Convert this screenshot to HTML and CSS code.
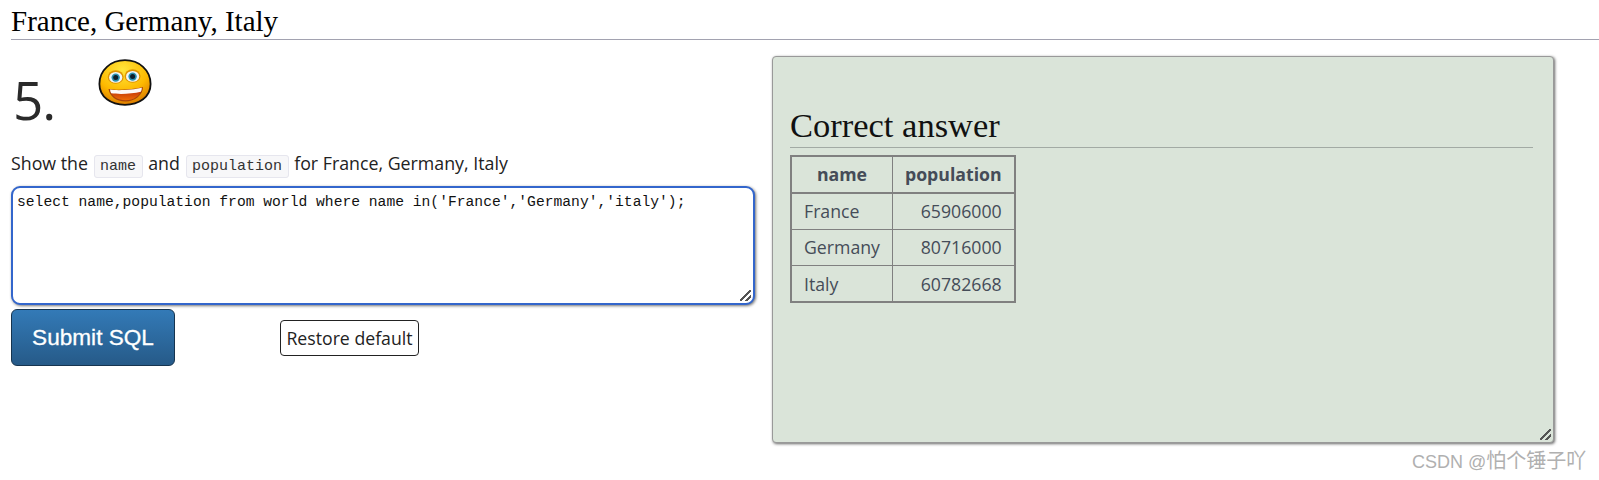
FILE: index.html
```html
<!DOCTYPE html>
<html lang="en">
<head>
<meta charset="utf-8">
<title>France, Germany, Italy</title>
<link rel="stylesheet" href="styles.css">
</head>
<body>
<h2 class="title">France, Germany, Italy</h2>
<main class="layout">
  <section class="question">
    <div class="qhead">
      <span class="qnum">5.</span>
      <svg class="smiley" width="54" height="47" viewBox="0 0 54 47" aria-hidden="true">
        <defs>
          <radialGradient id="face" cx="45%" cy="22%" r="82%">
            <stop offset="0" stop-color="#ffe63c"/>
            <stop offset="0.6" stop-color="#fdb900"/>
            <stop offset="1" stop-color="#d87400"/>
          </radialGradient>
          <linearGradient id="mouth" x1="0" y1="0" x2="0" y2="1">
            <stop offset="0" stop-color="#b82a08"/>
            <stop offset="1" stop-color="#ee6c06"/>
          </linearGradient>
        </defs>
        <path d="M27 1.2C41 1.2 52.6 11 52.6 25C52.6 38 41 45.8 27 45.8C13 45.8 1.4 38 1.4 25C1.4 11 13 1.2 27 1.2Z" fill="url(#face)" stroke="#111" stroke-width="1.8"/>
        <ellipse cx="17.7" cy="18" rx="8" ry="6.8" fill="#df9400"/>
        <ellipse cx="34.6" cy="17" rx="8" ry="6.8" fill="#df9400"/>
        <ellipse cx="17.7" cy="18.4" rx="6.6" ry="5.4" fill="#f0f6f7"/>
        <ellipse cx="34.6" cy="17.4" rx="6.6" ry="5.4" fill="#f0f6f7"/>
        <circle cx="17.7" cy="18.6" r="4.2" fill="#2a8fb0"/>
        <circle cx="34.6" cy="17.6" r="4.2" fill="#2a8fb0"/>
        <circle cx="17.7" cy="18.6" r="2.5" fill="#0e1f2a"/>
        <circle cx="34.6" cy="17.6" r="2.5" fill="#0e1f2a"/>
        <path d="M10.5 30C20 31.5 35 30.5 45 28C45 36 37 42.5 27.5 42.5C18 42.5 11.5 37 10.5 30Z" fill="#a8440a"/>
        <path d="M12.4 32C21 34 34 33 43.4 30C42.6 36.6 36 41.2 27.5 41.2C20 41.2 13.8 37.6 12.4 32Z" fill="url(#mouth)"/>
        <path d="M12 30.6C20 31.8 35 30.9 43.8 28.8C43.8 30.6 43.4 31.8 42.8 32.8C34 35 21 35.5 13.2 34.3C12.5 33.2 12.2 32 12 30.6Z" fill="#fdf9f6"/>
      </svg>
    </div>
    <p class="prompt">Show the <code class="tok">name</code> and <code class="tok">population</code> for France, Germany, Italy</p>
    <textarea class="sql" spellcheck="false">select name,population from world where name in('France','Germany','italy');</textarea>
    <div class="actions">
      <button class="submit" type="button">Submit SQL</button>
      <button class="restore" type="button">Restore default</button>
    </div>
  </section>
  <section class="answer">
    <h2 class="answer-title">Correct answer</h2>
    <table class="result">
      <thead>
        <tr><th>name</th><th>population</th></tr>
      </thead>
      <tbody>
        <tr><td>France</td><td class="num">65906000</td></tr>
        <tr><td>Germany</td><td class="num">80716000</td></tr>
        <tr><td>Italy</td><td class="num">60782668</td></tr>
      </tbody>
    </table>
  </section>
</main>
<div class="watermark">CSDN @<span class="wm-name">怕个锤子吖</span></div>
</body>
</html>
```

FILE: styles.css
```css
html, body {
  height: 100%;
  overflow: hidden;
}
body {
  margin: 0;
  padding: 0 11px;
  background: #fff;
  color: #222;
  font-family: "Open Sans", "Noto Sans", sans-serif;
  font-size: 16px;
  position: relative;
  box-sizing: border-box;
}
.title {
  margin: 0 -11px 0 0;
  height: 40px;
  box-sizing: border-box;
  padding-top: 4px;
  border-bottom: 1px solid #a2a2b0;
  color: #000;
  font-family: "Liberation Serif", serif;
  font-size: 29px;
  line-height: 34px;
  font-weight: 400;
}
.layout {
  display: grid;
  grid-template-columns: 744px 782px;
  column-gap: 17px;
  align-items: start;
  padding-top: 16px;
}
.qhead {
  display: flex;
  height: 96px;
  align-items: flex-start;
}
.qnum {
  font-size: 53px;
  line-height: 72px;
  letter-spacing: -1px;
  color: #2a2a2a;
  width: 85px;
  padding: 8px 0 0 2px;
}
.smiley {
  margin-top: 3px;
}
.prompt {
  margin: 0;
  height: 34px;
  line-height: 22px;
  font-size: 17.8px;
  white-space: nowrap;
  color: #222;
}
.tok {
  font-family: "Liberation Mono", monospace;
  font-size: 15px;
  background: #f7f7f9;
  border: 1px solid #e6e6ee;
  border-radius: 3px;
  padding: 2px 5.5px;
  margin: 0 1px;
  color: #333;
}
.sql {
  display: block;
  width: 744px;
  height: 119px;
  box-sizing: border-box;
  margin: 0;
  padding: 5px 4px 3px;
  border: 2px solid #3366cc;
  border-radius: 9px;
  outline: none;
  box-shadow: 1px 1px 3px rgba(0,0,0,.55);
  font-family: "Liberation Mono", monospace;
  font-size: 14.67px;
  line-height: 18px;
  color: #111;
  resize: both;
}
.sql::-webkit-resizer,
.answer::-webkit-resizer {
  background: linear-gradient(135deg, transparent 44%, #555 44%, #555 56%, transparent 56%, transparent 70%, #555 70%, #555 82%, transparent 82%) no-repeat 2px 2px / 11px 11px;
}
.actions {
  display: flex;
  align-items: flex-start;
  padding-top: 4px;
}
.submit {
  width: 164px;
  height: 57px;
  border: 1px solid #16344f;
  border-radius: 6px;
  background: linear-gradient(#337ab7, #265a88);
  color: #fff;
  font-family: "Liberation Sans", sans-serif;
  font-size: 22.6px;
  -webkit-text-stroke: 0.3px #fff;
  padding: 0;
}
.restore {
  margin: 11px 0 0 105px;
  width: 139px;
  height: 36px;
  border: 1px solid #222;
  border-radius: 4px;
  background: #fff;
  color: #222;
  font-family: "Open Sans", sans-serif;
  font-size: 17.7px;
  padding: 0;
  white-space: nowrap;
}
.answer {
  height: 387px;
  box-sizing: border-box;
  padding: 53px 20px 0 17px;
  background: #dae4d9;
  border: 1px solid #999;
  border-radius: 4px;
  box-shadow: 1px 1px 3px rgba(0,0,0,.6);
  overflow: hidden;
  resize: both;
}
.answer-title {
  margin: 0 0 7px;
  height: 37px;
  border-bottom: 1px solid #a2aaa4;
  color: #111;
  font-family: "Liberation Serif", serif;
  font-size: 34.5px;
  line-height: 31px;
  font-weight: 400;
  white-space: nowrap;
}
.result {
  border-collapse: collapse;
  border: 2px solid #808080;
  color: #454c58;
  font-size: 17.7px;
}
.result th, .result td {
  border: 1px solid #808080;
  padding: 0 12px;
  height: 36.5px;
  box-sizing: border-box;
  line-height: 24px;
}
.result th {
  border-bottom-width: 2px;
  font-weight: 700;
  text-align: center;
}
.result .num {
  text-align: right;
}
.watermark {
  position: absolute;
  left: 1412px;
  top: 449px;
  font-family: "Liberation Sans", "Noto Sans CJK SC", sans-serif;
  font-size: 18px;
  line-height: 24px;
  color: #b0b0b0;
  white-space: nowrap;
}
.wm-name {
  font-size: 20px;
}
```
